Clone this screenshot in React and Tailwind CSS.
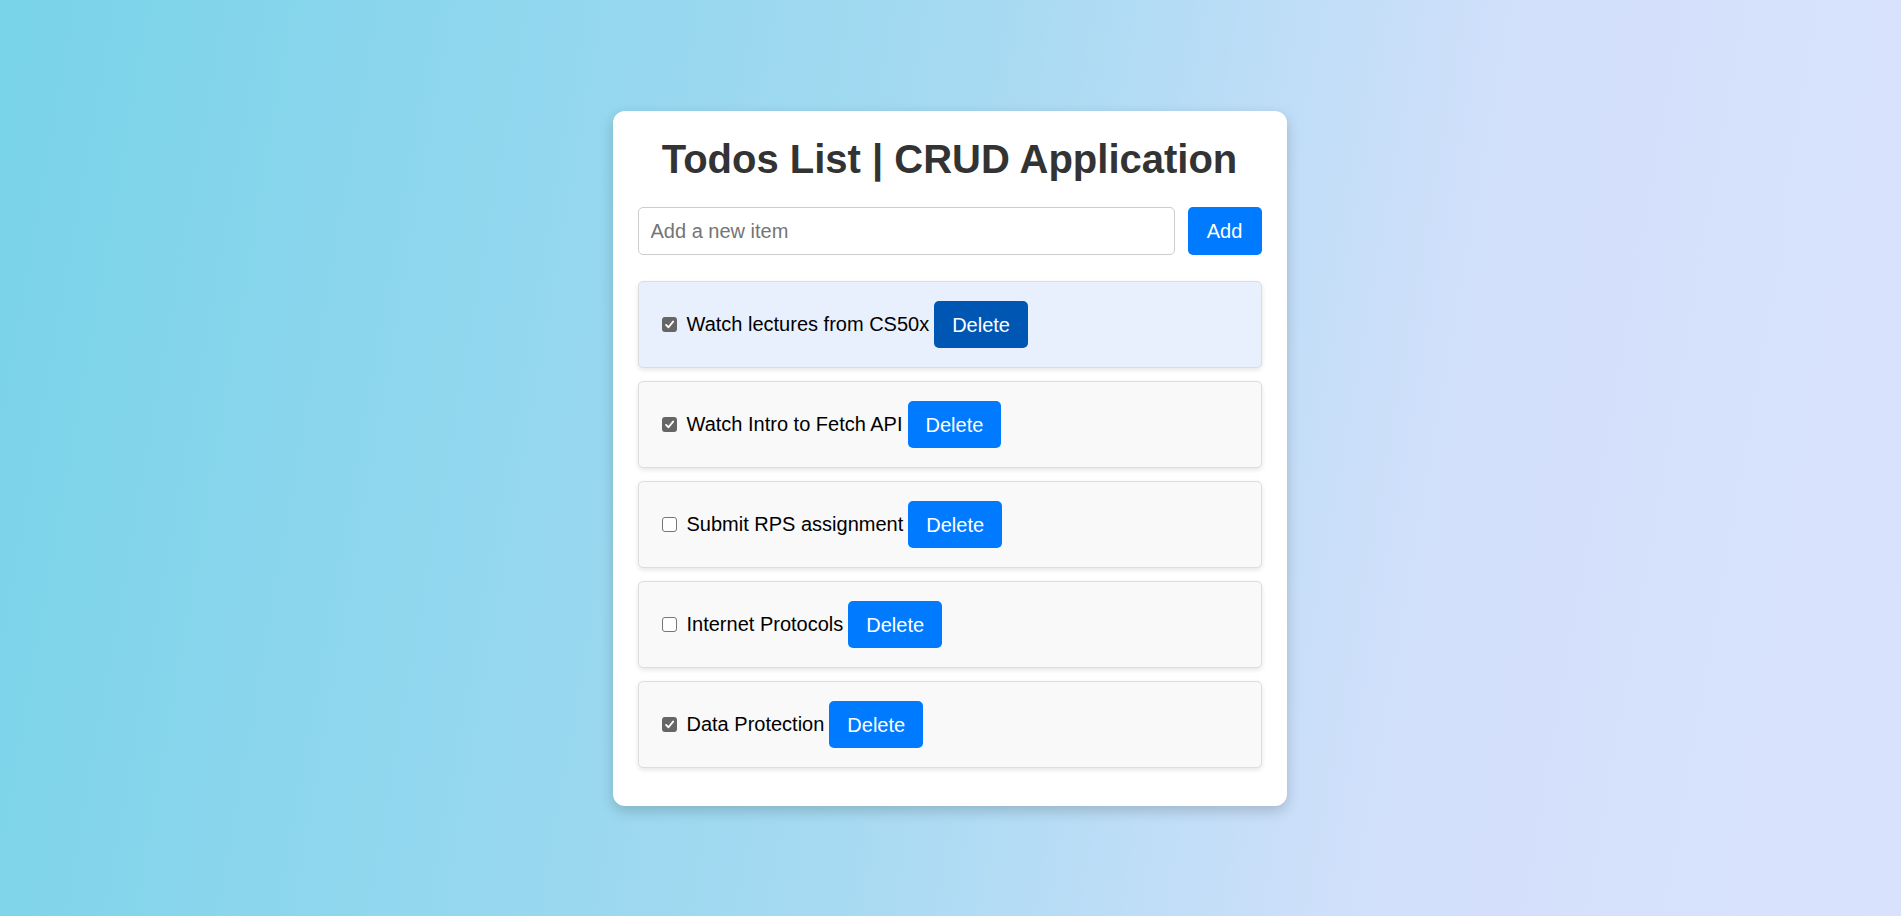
import { useState } from 'react';

const initialTodos = [
  { id: 1, text: 'Watch lectures from CS50x', done: true },
  { id: 2, text: 'Watch Intro to Fetch API', done: true },
  { id: 3, text: 'Submit RPS assignment', done: false },
  { id: 4, text: 'Internet Protocols', done: false },
  { id: 5, text: 'Data Protection', done: true },
];

function Checkbox({ checked, onChange }) {
  return (
    <button
      type="button"
      onClick={onChange}
      className={
        checked
          ? 'w-[15px] h-[15px] rounded-[3px] bg-[#666666] flex items-center justify-center shrink-0'
          : 'w-[15px] h-[15px] rounded-[3px] bg-white border border-[#767676] shrink-0'
      }
    >
      {checked && (
        <svg viewBox="0 0 12 12" className="w-[11px] h-[11px]">
          <path d="M2.2 6.4 L4.9 9 L9.9 2.8" fill="none" stroke="white" strokeWidth="2" strokeLinecap="round" strokeLinejoin="round" />
        </svg>
      )}
    </button>
  );
}

function App() {
  const [todos, setTodos] = useState(initialTodos);
  const [text, setText] = useState('');

  const toggle = (id) => setTodos(todos.map((t) => (t.id === id ? { ...t, done: !t.done } : t)));
  const remove = (id) => setTodos(todos.filter((t) => t.id !== id));
  const add = () => {
    if (!text.trim()) return;
    setTodos([...todos, { id: Date.now(), text: text.trim(), done: false }]);
    setText('');
  };

  return (
    <div className="min-h-screen w-full flex justify-center items-start bg-[linear-gradient(100deg,#78d3e9_0%,#a6daf2_48%,#d3e0fb_75%,#d9e2fc_100%)] font-['Liberation_Sans',Arial,sans-serif]">
      <div className="mt-[111px] mr-[2px] w-[674px] bg-white rounded-[12px] p-[25px] shadow-[0_5px_14px_rgba(0,0,0,0.18)]">
        <h1 className="text-center text-[40px] leading-[46px] font-bold text-[#333333] mb-[25px]">
          Todos List | CRUD Application
        </h1>

        {/* Add row */}
        <div className="flex gap-[13px] mb-[26px]">
          <input
            value={text}
            onChange={(e) => setText(e.target.value)}
            placeholder="Add a new item"
            className="flex-1 h-[48px] px-[12px] text-[20px] text-black placeholder:text-[#757575] border border-[#cccccc] rounded-[5px] outline-none"
          />
          <button
            onClick={add}
            className="h-[48px] w-[74px] bg-[#007bff] text-white text-[20px] rounded-[5px]"
          >
            Add
          </button>
        </div>

        {/* Items */}
        <div className="flex flex-col gap-[13px] mb-[13px]">
          {todos.map((todo, i) => (
            <div
              key={todo.id}
              className={
                i === 0
                  ? 'flex items-center h-[87px] pl-[23px] border border-[#dddddd] rounded-[5px] bg-[#e8f0fe] shadow-[0_2px_5px_rgba(0,0,0,0.1)]'
                  : 'flex items-center h-[87px] pl-[23px] border border-[#dddddd] rounded-[5px] bg-[#f9f9f9] shadow-[0_2px_5px_rgba(0,0,0,0.1)]'
              }
            >
              <Checkbox checked={todo.done} onChange={() => toggle(todo.id)} />
              <span className="ml-[10px] text-[20px] leading-[23px] text-black">{todo.text}</span>
              <button
                onClick={() => remove(todo.id)}
                className={
                  i === 0
                    ? 'ml-[5px] h-[47px] px-[18px] bg-[#0056b3] text-white text-[20px] rounded-[5px]'
                    : 'ml-[5px] h-[47px] px-[18px] bg-[#007bff] text-white text-[20px] rounded-[5px]'
                }
              >
                Delete
              </button>
            </div>
          ))}
        </div>
      </div>
    </div>
  );
}

export default App;
